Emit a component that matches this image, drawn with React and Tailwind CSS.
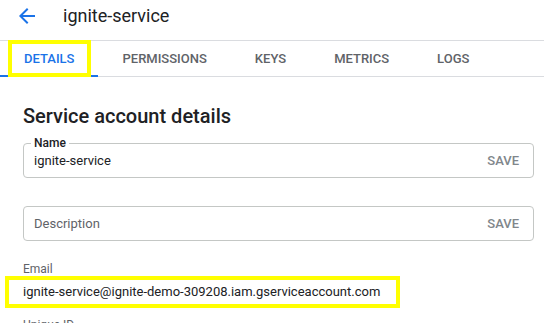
import { useState } from 'react'

const TABS = ['DETAILS', 'PERMISSIONS', 'KEYS', 'METRICS', 'LOGS']

const App = () => {
    // ACTIVE TAB
    const [active, setActive] = useState('DETAILS')

    return (
        <div className="w-[544px] h-[323px] overflow-hidden bg-white text-[#202124]" style={{ fontFamily: 'Roboto, "Noto Sans", sans-serif' }}>

            {/* HEADER */}
            <div className="flex items-center h-[40px] pl-[15px] pb-[8px]">
                <svg width="24" height="24" viewBox="0 0 24 24" className="text-[#1a73e8]">
                    <path fill="currentColor" d="M20 11H7.83l5.59-5.59L12 4l-8 8 8 8 1.41-1.41L7.83 13H20v-2z" />
                </svg>
                <span className="ml-[24px] text-[18px] leading-none">ignite-service</span>
            </div>

            {/* TABS */}
            <div className="relative flex h-[37px] border-y border-[#dadce0]">
                {TABS.map((tab) => (
                    <button
                        key={tab}
                        onClick={() => setActive(tab)}
                        className={`relative px-[24px] text-[13px] font-medium ${active === tab ? 'text-[#1a73e8]' : 'text-[#5f6368]'}`}
                    >
                        {tab}
                        {active === tab && <span className="absolute left-0 right-0 bottom-[-1px] h-[2px] bg-[#1a73e8]" />}
                    </button>
                ))}
                {/* HIGHLIGHT */}
                <div className="absolute left-[8px] top-[-1px] w-[83px] h-[37px] border-[4px] border-[#ffff00] pointer-events-none" />
            </div>

            {/* CONTENT */}
            <div className="pl-[23px] pr-[10px]">
                <h1 className="mt-[25px] text-[20px] leading-[28px] font-medium">Service account details</h1>

                {/* NAME */}
                <div className="relative mt-[13px] flex items-center justify-between h-[35px] pl-[10px] pr-[14px] border border-[#c4c7c5] rounded-[4px]">
                    <span className="absolute left-[7px] top-[-9px] bg-white px-[3px] text-[12px] leading-[16px] font-medium text-[#202124]">Name</span>
                    <span className="text-[13px]">ignite-service</span>
                    <span className="text-[13px] font-medium text-[#80868b]">SAVE</span>
                </div>

                {/* DESCRIPTION */}
                <div className="mt-[28px] flex items-center justify-between h-[35px] pl-[10px] pr-[14px] border border-[#c4c7c5] rounded-[4px]">
                    <span className="text-[13px] text-[#5f6368]">Description</span>
                    <span className="text-[13px] font-medium text-[#80868b]">SAVE</span>
                </div>

                {/* EMAIL */}
                <div className="mt-[21px] text-[12px] leading-[14px] text-[#5f6368]">Email</div>
                <div className="relative h-[32px] flex items-center">
                    <div className="absolute left-[-18px] top-0 w-[395px] h-[32px] border-[4px] border-[#ffff00] pointer-events-none" />
                    <span className="text-[13px]">ignite-service@ignite-demo-309208.iam.gserviceaccount.com</span>
                </div>

                <div className="mt-[10px] text-[12px] leading-[14px] text-[#5f6368]">Unique ID</div>
            </div>
        </div>
    )
}

export default App
